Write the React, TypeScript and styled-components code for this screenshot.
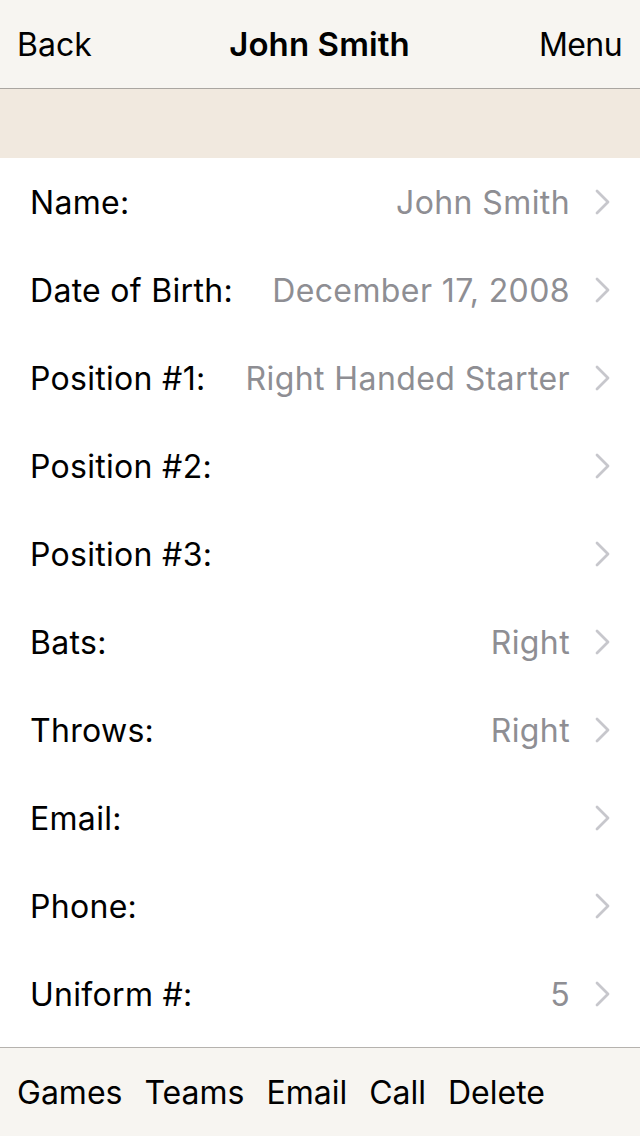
import React from "react";
import styled, { createGlobalStyle } from "styled-components";

const Global = createGlobalStyle`
  html, body { margin: 0; padding: 0; background: #ffffff; }
  body { font-family: Inter, "Noto Sans", sans-serif; -webkit-font-smoothing: antialiased; }
`;

const Page = styled.div`
  width: 640px;
  height: 1136px;
  display: flex;
  flex-direction: column;
  background: #ffffff;
  overflow: hidden;
`;

const NavBar = styled.header`
  height: 89px;
  flex: none;
  display: grid;
  grid-template-columns: 1fr auto 1fr;
  align-items: center;
  padding: 0 18px 0 17px;
  background: #f7f5f1;
  border-bottom: 1px solid #aaa6a1;
  box-sizing: border-box;
`;

const NavButton = styled.span<{ $align: "left" | "right" }>`
  font-size: 32px;
  color: #000;
  letter-spacing: ${(p) => (p.$align === "left" ? "0" : "-0.6px")};
  justify-self: ${(p) => (p.$align === "left" ? "start" : "end")};
`;

const Title = styled.span`
  font-size: 33px;
  font-weight: 600;
  color: #000;
  letter-spacing: 0.1px;
`;

const Band = styled.div`
  height: 69px;
  flex: none;
  background: #f1e9df;
`;

const List = styled.div`
  display: flex;
  flex-direction: column;
  flex: 1;
`;

const Row = styled.div`
  height: 88px;
  display: flex;
  align-items: center;
  padding: 0 30px 0 30px;
`;

const Label = styled.span`
  font-size: 32px;
  color: #000;
  letter-spacing: 0.3px;
  white-space: nowrap;
`;

const Value = styled.span`
  font-size: 32px;
  color: #8e8e93;
  margin-left: auto;
  letter-spacing: 0.4px;
  white-space: nowrap;
`;

const Chevron = styled.svg`
  width: 15px;
  height: 26px;
  margin-left: 25px;
  flex: none;
`;

const TabBar = styled.footer`
  height: 89px;
  flex: none;
  display: flex;
  align-items: center;
  gap: 22px;
  padding: 0 17px;
  box-sizing: border-box;
  background: #f7f5f1;
  border-top: 1px solid #b5b2ae;
`;

const TabItem = styled.span`
  font-size: 32px;
  color: #000;
  letter-spacing: 0;
`;

const rows: { label: string; value?: string }[] = [
  { label: "Name:", value: "John Smith" },
  { label: "Date of Birth:", value: "December 17, 2008" },
  { label: "Position #1:", value: "Right Handed Starter" },
  { label: "Position #2:" },
  { label: "Position #3:" },
  { label: "Bats:", value: "Right" },
  { label: "Throws:", value: "Right" },
  { label: "Email:" },
  { label: "Phone:" },
  { label: "Uniform #:", value: "5" },
];

const ChevronIcon = () => (
  <Chevron viewBox="0 0 15 26">
    <path d="M2 2 L13 13 L2 24" fill="none" stroke="#c7c7cc" strokeWidth="2.8" strokeLinecap="round" strokeLinejoin="round" />
  </Chevron>
);

export default function App() {
  return (
    <Page>
      <Global />
      <NavBar>
        <NavButton $align="left">Back</NavButton>
        <Title>John Smith</Title>
        <NavButton $align="right">Menu</NavButton>
      </NavBar>
      <Band />
      <List>
        {rows.map((r) => (
          <Row key={r.label}>
            <Label>{r.label}</Label>
            <Value>{r.value ?? ""}</Value>
            <ChevronIcon />
          </Row>
        ))}
      </List>
      <TabBar>
        {["Games", "Teams", "Email", "Call", "Delete"].map((t) => (
          <TabItem key={t}>{t}</TabItem>
        ))}
      </TabBar>
    </Page>
  );
}
